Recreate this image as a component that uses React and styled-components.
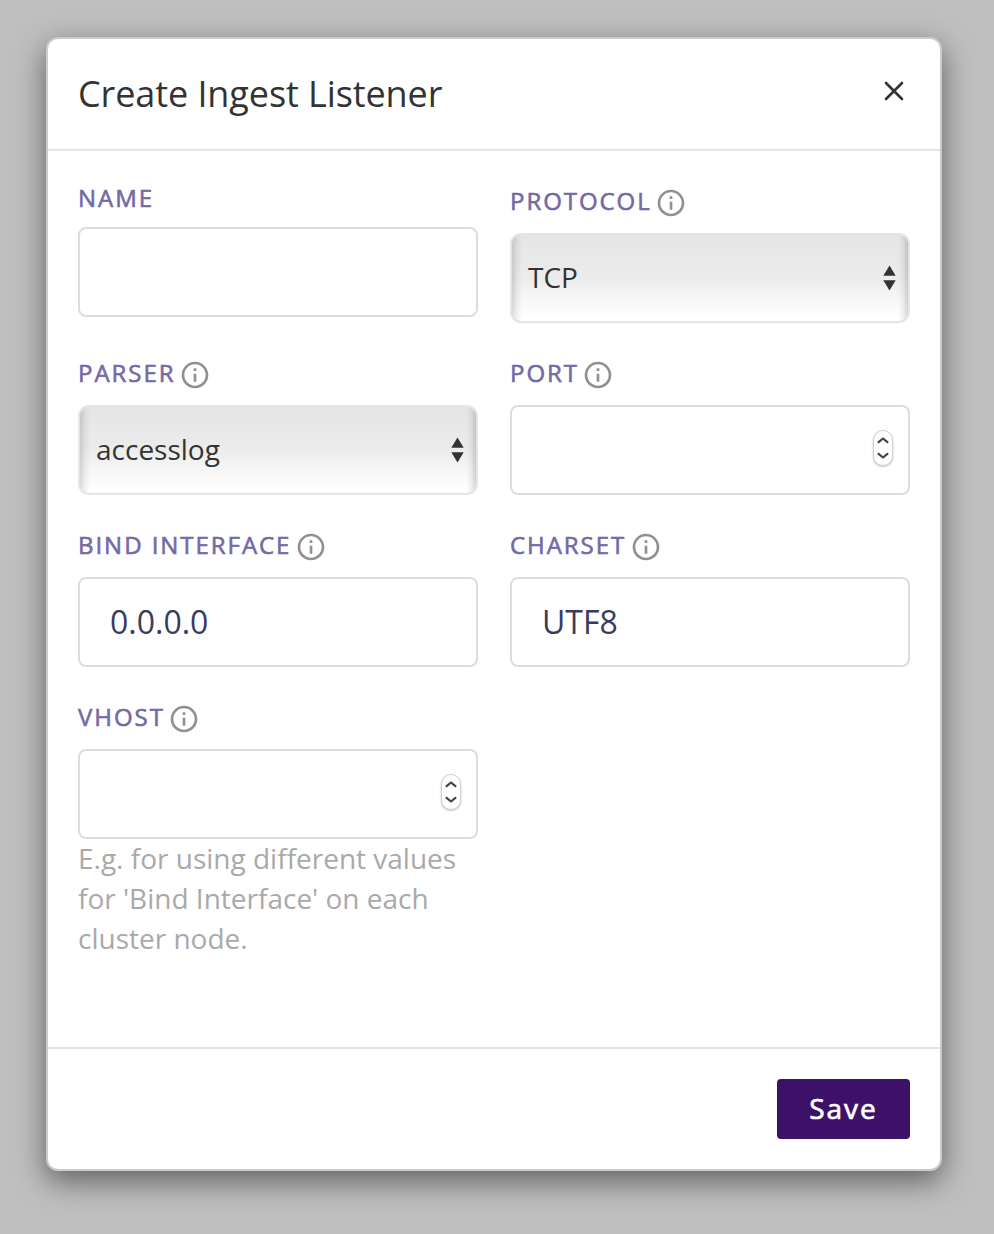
import React from "react";
import styled, { createGlobalStyle } from "styled-components";
import { MdInfoOutline } from "react-icons/md";

const GlobalStyle = createGlobalStyle`
  *, *::before, *::after { box-sizing: border-box; }
  body {
    margin: 0;
    background: #bfbfbf;
    color: #333;
    font-family: "Open Sans", "Noto Sans", sans-serif;
  }
`;

const Backdrop = styled.main`
  min-height: 1234px;
  padding: 37px 52px 63px 46px;
  background: #bfbfbf;
`;

const Modal = styled.section`
  display: flex;
  flex-direction: column;
  width: 896px;
  height: 1134px;
  border: 2px solid #cbcbcb;
  border-radius: 12px;
  background: #fff;
  box-shadow: 0 10px 30px rgba(0, 0, 0, 0.5);
`;

const Header = styled.header`
  display: flex;
  align-items: flex-start;
  justify-content: space-between;
  height: 112px;
  padding: 30px 30px 0;
  border-bottom: 2px solid #e5e5e5;
`;

const Title = styled.h1`
  margin: 0;
  font-size: 36px;
  font-weight: 400;
  letter-spacing: -0.09px;
  line-height: 50px;
  white-space: nowrap;
`;

const CloseButton = styled.button`
  display: flex;
  margin: 6px 0 0;
  padding: 0;
  border: 0;
  background: none;
  color: #333;
`;

const Body = styled.form`
  display: grid;
  flex: 1;
  grid-template-columns: 400px 400px;
  grid-auto-rows: 172px;
  column-gap: 32px;
  padding: 32px 30px 0;
`;

const Field = styled.div`
  display: flex;
  flex-direction: column;
`;

const Label = styled.label`
  display: flex;
  flex-shrink: 0;
  align-items: flex-start;
  height: ${(p) => (p.$compact ? 44 : 50)}px;
  padding-top: ${(p) => (p.$compact ? 0 : 3)}px;
  color: #746aa5;
  font-size: 24px;
  font-weight: 400;
  letter-spacing: 1.95px;
  line-height: 30px;
  text-transform: uppercase;
  white-space: nowrap;
  -webkit-text-stroke: 0.6px currentColor;

  svg {
    width: 32px;
    height: 32px;
    margin: 1px 0 0 3.4px;
    color: #909090;
  }
`;

const Control = styled.div`
  display: flex;
  flex-shrink: 0;
  align-items: center;
  justify-content: space-between;
  height: 90px;
  padding: 0 15px 0 30px;
  border: 2px solid #d9dde2;
  border-radius: 8px;
  background: #fff;
`;

const TextInput = styled.input`
  flex: 1;
  min-width: 0;
  padding: 0;
  border: 0;
  outline: 0;
  background: transparent;
  color: #3b3b60;
  font: 400 32px/44px "Open Sans", "Noto Sans", sans-serif;
`;

const SelectBox = styled(Control)`
  padding: 0 12px 0 16px;
  border-color: #e5e5e5;
  border-radius: 11px;
  background:
    linear-gradient(to right, rgba(0, 0, 0, 0.14), rgba(0, 0, 0, 0.05) 5px, transparent 10px),
    linear-gradient(to left, rgba(0, 0, 0, 0.16), rgba(0, 0, 0, 0.05) 5px, transparent 10px),
    linear-gradient(#e5e5e5, #ececec 50%, #f4f4f4 68%, #fff 96%);
  font-size: 28px;
  line-height: 40px;
`;

const SelectValue = styled.span`
  padding-bottom: 2px;
`;

const Stepper = styled.span`
  display: flex;
  align-items: center;
  justify-content: center;
  width: 20px;
  height: 36px;
  margin-top: -4px;
  border: 1px solid #d2d2d2;
  border-radius: 10px;
  background: #fff;
  box-shadow: 0 1px 2px rgba(0, 0, 0, 0.25);
`;

const Help = styled.p`
  margin: -1px 0 0;
  color: #a9a9a9;
  font-size: 28px;
  line-height: 40px;
  white-space: nowrap;
`;

const Footer = styled.footer`
  display: flex;
  justify-content: flex-end;
  height: 122px;
  padding: 30px 30px 0;
  border-top: 2px solid #e5e5e5;
`;

const SaveButton = styled.button`
  width: 133px;
  height: 60px;
  padding: 0 0 2px;
  border: 0;
  border-radius: 4px;
  background: #3d1168;
  color: #fff;
  font: 400 28px/58px "Open Sans", "Noto Sans", sans-serif;
  letter-spacing: 2px;
  -webkit-text-stroke: 0.7px currentColor;
`;

function CloseIcon() {
  return (
    <svg width="32" height="32" viewBox="0 0 32 32" fill="none" stroke="currentColor" strokeWidth="2.6" strokeLinecap="round">
      <path d="M8 8 24 24M24 8 8 24" />
    </svg>
  );
}

function SelectArrows() {
  return (
    <svg width="13" height="26" viewBox="0 0 13 26" fill="#333">
      <path d="M6.5 0.5 12.7 10.7H0.3ZM0.3 15.3H12.7L6.5 25.5Z" />
    </svg>
  );
}

function NumberStepper() {
  return (
    <Stepper>
      <svg width="12" height="24" viewBox="0 0 12 24" fill="none" stroke="#444" strokeWidth="2.2" strokeLinecap="round" strokeLinejoin="round">
        <path d="M1.6 6.2 6 2.5 10.4 6.2M1.6 17.8 6 21.5 10.4 17.8" />
      </svg>
    </Stepper>
  );
}

function FormField({ label, info = true, kind = "text", value = "", help }) {
  return (
    <Field>
      <Label $compact={!info}>
        {label}
        {info && <MdInfoOutline />}
      </Label>
      {kind === "select" ? (
        <SelectBox>
          <SelectValue>{value}</SelectValue>
          <SelectArrows />
        </SelectBox>
      ) : (
        <Control>
          <TextInput aria-label={label} defaultValue={value} />
          {kind === "number" && <NumberStepper />}
        </Control>
      )}
      {help && <Help>{help}</Help>}
    </Field>
  );
}

export default function App() {
  return (
    <Backdrop>
      <GlobalStyle />
      <Modal>
        <Header>
          <Title>Create Ingest Listener</Title>
          <CloseButton type="button" aria-label="Close">
            <CloseIcon />
          </CloseButton>
        </Header>
        <Body>
          <FormField label="Name" info={false} />
          <FormField label="Protocol" kind="select" value="TCP" />
          <FormField label="Parser" kind="select" value="accesslog" />
          <FormField label="Port" kind="number" />
          <FormField label="Bind Interface" value="0.0.0.0" />
          <FormField label="Charset" value="UTF8" />
          <FormField
            label="Vhost"
            kind="number"
            help={
              <>
                E.g. for using different values
                <br />
                for 'Bind Interface' on each
                <br />
                cluster node.
              </>
            }
          />
        </Body>
        <Footer>
          <SaveButton type="button">Save</SaveButton>
        </Footer>
      </Modal>
    </Backdrop>
  );
}
